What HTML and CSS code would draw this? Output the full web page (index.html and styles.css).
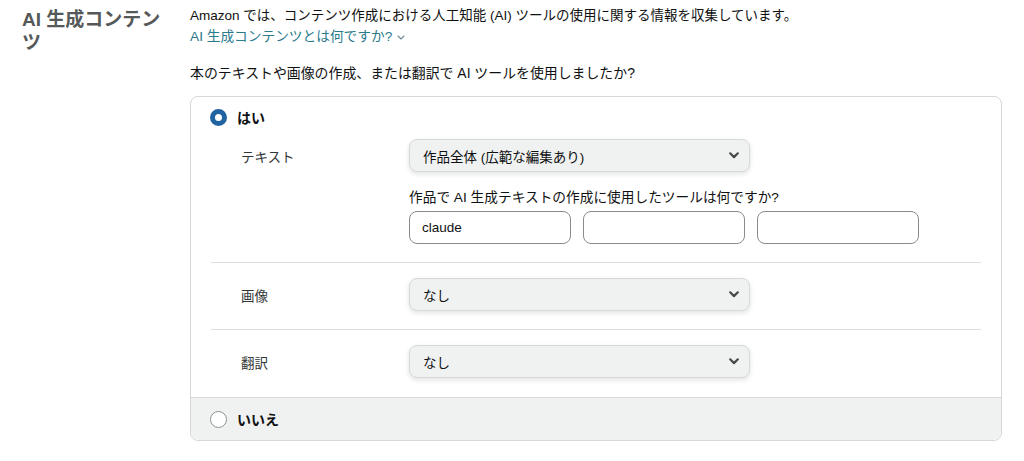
FILE: index.html
```html
<!DOCTYPE html>
<html lang="ja">
<head>
<meta charset="utf-8">
<title>AI 生成コンテンツ</title>
<link rel="stylesheet" href="styles.css">
</head>
<body>
<section class="section">
  <h2 class="section-title">AI 生成コンテンツ</h2>
  <div class="section-body">
    <p class="intro">Amazon では、コンテンツ作成における人工知能 (AI) ツールの使用に関する情報を収集しています。</p>
    <a class="help-link" href="#">AI 生成コンテンツとは何ですか?<svg class="help-caret" width="8" height="5" viewBox="0 0 8 5"><path d="M1 1l3 3 3-3" fill="none" stroke="currentColor" stroke-width="1.1" stroke-linecap="round" stroke-linejoin="round"/></svg></a>
    <p class="question">本のテキストや画像の作成、または翻訳で AI ツールを使用しましたか?</p>

    <div class="choice-box">
      <div class="choice choice-yes">
        <div class="choice-head">
          <span class="radio radio-on"></span>
          <span class="choice-label">はい</span>
        </div>

        <div class="field field-first">
          <div class="field-label">テキスト</div>
          <div class="field-control">
            <div class="dropdown">
              <span>作品全体 (広範な編集あり)</span>
              <svg class="dropdown-caret" width="10" height="7" viewBox="0 0 10 7"><path d="M1.2 1.3l3.8 3.8 3.8-3.8" fill="none" stroke="currentColor" stroke-width="2.2" stroke-linecap="round" stroke-linejoin="round"/></svg>
            </div>
            <p class="tools-question">作品で AI 生成テキストの作成に使用したツールは何ですか?</p>
            <div class="tool-inputs">
              <input class="text-input" type="text" value="claude">
              <input class="text-input" type="text" value="">
              <input class="text-input" type="text" value="">
            </div>
          </div>
        </div>

        <div class="field">
          <div class="field-label">画像</div>
          <div class="field-control">
            <div class="dropdown">
              <span>なし</span>
              <svg class="dropdown-caret" width="10" height="7" viewBox="0 0 10 7"><path d="M1.2 1.3l3.8 3.8 3.8-3.8" fill="none" stroke="currentColor" stroke-width="2.2" stroke-linecap="round" stroke-linejoin="round"/></svg>
            </div>
          </div>
        </div>

        <div class="field field-last">
          <div class="field-label">翻訳</div>
          <div class="field-control">
            <div class="dropdown">
              <span>なし</span>
              <svg class="dropdown-caret" width="10" height="7" viewBox="0 0 10 7"><path d="M1.2 1.3l3.8 3.8 3.8-3.8" fill="none" stroke="currentColor" stroke-width="2.2" stroke-linecap="round" stroke-linejoin="round"/></svg>
            </div>
          </div>
        </div>
      </div>

      <div class="choice choice-no">
        <div class="choice-head">
          <span class="radio"></span>
          <span class="choice-label">いいえ</span>
        </div>
      </div>
    </div>
  </div>
</section>
</body>
</html>
```

FILE: styles.css
```css
* {
  box-sizing: border-box;
}

body {
  margin: 0;
  background: #ffffff;
  color: #0f1111;
  font-family: "Liberation Sans", "Noto Sans CJK JP", sans-serif;
  font-size: 13.5px;
}

p {
  margin: 0;
}

.section {
  display: flex;
  gap: 20px;
  padding: 5px 22px 0 22px;
}

.section-title {
  flex: 0 0 148px;
  margin: 0;
  padding-top: 3px;
  font-size: 19px;
  line-height: 23px;
  font-weight: 700;
  color: #565959;
}

.section-body {
  flex: 1;
}

.intro {
  line-height: 21px;
}

.help-link {
  display: inline-flex;
  align-items: center;
  gap: 5px;
  line-height: 21px;
  font-size: 13.7px;
  color: #2b7a8c;
  text-decoration: none;
}

.help-caret {
  color: #6b8c94;
  margin-top: 2px;
}

.question {
  margin-top: 16px;
  line-height: 21px;
  font-size: 13.9px;
}

.choice-box {
  margin-top: 12px;
  border: 1px solid #d5d9d9;
  border-radius: 8px;
  overflow: hidden;
}

.choice-yes {
  padding: 11px 19px 0 19px;
}

.choice-head {
  display: flex;
  align-items: center;
  gap: 10px;
  height: 18px;
}

.choice-label {
  font-weight: 700;
  font-size: 14px;
}

.radio {
  width: 17px;
  height: 17px;
  border-radius: 50%;
  border: 1px solid #8d9090;
  background: #ffffff;
  flex: 0 0 17px;
}

.radio-on {
  border: 5px solid #2162a1;
}

.field {
  display: grid;
  grid-template-columns: 168px 1fr;
  margin: 0 1px;
  padding: 15px 0 18px 30px;
  border-bottom: 1px solid #dddfdf;
}

.field-first {
  padding-top: 13px;
}

.field-last {
  border-bottom: none;
  padding-bottom: 19px;
}

.field-label {
  display: flex;
  align-items: center;
  height: 33px;
  color: #333636;
}

.dropdown {
  display: flex;
  align-items: center;
  justify-content: space-between;
  width: 341px;
  height: 33px;
  padding: 0 10px 0 13px;
  background: #f0f2f2;
  border: 1px solid #d5d9d9;
  border-radius: 8px;
  box-shadow: 0 2px 5px rgba(15, 17, 17, 0.12);
}

.dropdown-caret {
  color: #474b4b;
}

.tools-question {
  margin-top: 15px;
  line-height: 21px;
  font-size: 13.7px;
}

.tool-inputs {
  display: flex;
  gap: 12px;
  margin-top: 3px;
}

.text-input {
  width: 162px;
  height: 33px;
  padding: 0 12px;
  border: 1px solid #888c8c;
  border-radius: 8px;
  font-family: "Liberation Sans", "Noto Sans CJK JP", sans-serif;
  font-size: 13.5px;
  color: #0f1111;
  background: #ffffff;
  outline: none;
}

.choice-no {
  height: 43px;
  padding: 0 19px;
  display: flex;
  align-items: center;
  background: #f0f2f2;
  border-top: 1px solid #d5d9d9;
}
```
